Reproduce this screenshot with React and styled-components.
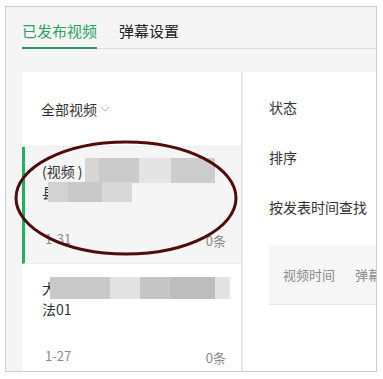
import React from "react";
import styled, { createGlobalStyle } from "styled-components";

const Global = createGlobalStyle`
  html, body { margin: 0; padding: 0; background: #fff; }
  body { font-family: "Noto Sans CJK SC", "Noto Sans", sans-serif; color: #333; }
`;

const Page = styled.div`
  width: 383px;
  height: 379px;
  padding: 6px 6px 0 5px;
  box-sizing: border-box;
  overflow: hidden;
`;

const Frame = styled.div`
  position: relative;
  height: 366px;
  border: 1px solid #cdcdcd;
  background: #f5f5f5;
  box-sizing: border-box;
  display: flex;
  flex-direction: column;
  overflow: hidden;
`;

const TabBar = styled.div`
  display: flex;
  align-items: flex-end;
  gap: 22px;
  height: 42px;
  flex-shrink: 0;
  margin-left: 16px;
  border-bottom: 1px solid #dcdcdc;
  box-sizing: border-box;
`;

const Tab = styled.div`
  font-size: 15px;
  line-height: 20px;
  padding-bottom: 6px;
  color: ${(p) => (p.$active ? "#2d9f68" : "#222")};
  border-bottom: 2px solid ${(p) => (p.$active ? "#2d9366" : "transparent")};
  margin-bottom: -1px;
`;

const Body = styled.div`
  flex: 1;
  display: flex;
  margin: 23px 0 0 16px;
  min-height: 0;
`;

const LeftPanel = styled.div`
  width: 219px;
  background: #fff;
  border-right: 1px solid #e4e4e4;
  display: flex;
  flex-direction: column;
  overflow: hidden;
`;

const Filter = styled.div`
  height: 75px;
  flex-shrink: 0;
  display: flex;
  align-items: center;
  gap: 3px;
  padding-left: 19px;
  font-size: 14px;
  color: #333;
  border-bottom: 1px solid #ececec;
  box-sizing: border-box;
`;

const Item = styled.div`
  height: 117px;
  flex-shrink: 0;
  box-sizing: border-box;
  padding: 13px 15px 15px 17px;
  display: flex;
  flex-direction: column;
  justify-content: space-between;
  background: ${(p) => (p.$active ? "#f5f5f5" : "#fff")};
  border-left: 3px solid ${(p) => (p.$active ? "#1fb25c" : "#fff")};
  border-bottom: 1px solid #ececec;
`;

const TitleLine = styled.div`
  display: flex;
  align-items: center;
  height: 21px;
  font-size: 14px;
  color: #333;
  white-space: nowrap;
`;

const Mosaic = styled.div`
  display: flex;
  align-items: stretch;
  height: ${(p) => p.$h || 22}px;
  margin-left: ${(p) => p.$ml || 0}px;
`;

const Cell = styled.div`
  width: ${(p) => p.$w}px;
  background: ${(p) => p.$c};
`;

const Foot = styled.div`
  display: flex;
  justify-content: space-between;
  align-items: flex-end;
  font-size: 13px;
  color: #8a8a8a;
  padding-left: 3px;
`;

const Count = styled.span`
  transform: translateY(2px);
`;

const RightPanel = styled.div`
  flex: 1;
  background: #fff;
  border-left: 1px solid #ececec;
  padding: 24px 0 0 26px;
  display: flex;
  flex-direction: column;
  min-width: 0;
`;

const Field = styled.div`
  height: 50px;
  flex-shrink: 0;
  line-height: 22px;
  font-size: 14px;
  color: #333;
  white-space: nowrap;
`;

const TableHead = styled.div`
  margin-top: -1px;
  height: 59px;
  flex-shrink: 0;
  background: #f6f6f6;
  border-bottom: 1px solid #e6e6e6;
  display: flex;
  align-items: center;
  gap: 20px;
  padding-left: 14px;
  font-size: 13px;
  color: #8a8a8a;
  white-space: nowrap;
  overflow: hidden;
`;

const Ring = styled.svg`
  position: absolute;
  left: 0;
  top: 0;
  pointer-events: none;
`;

const Chevron = () => (
  <svg width="10" height="8" viewBox="0 0 10 8">
    <path d="M1 2 L5 6 L9 2" fill="none" stroke="#bbb" strokeWidth="1" />
  </svg>
);

export default function App() {
  return (
    <>
      <Global />
      <Page>
        <Frame>
          <TabBar>
            <Tab $active>已发布视频</Tab>
            <Tab>弹幕设置</Tab>
          </TabBar>
          <Body>
            <LeftPanel>
              <Filter>
                全部视频
                <Chevron />
              </Filter>
              <Item $active>
                <div>
                  <TitleLine>
                    (视频 )
                    <Mosaic $h={25} $ml={2}>
                      <Cell $w={14} $c="#d6d6d6" />
                      <Cell $w={40} $c="#cbcbcb" />
                      <Cell $w={32} $c="#e4e4e4" />
                      <Cell $w={44} $c="#cdcdcd" />
                    </Mosaic>
                  </TitleLine>
                  <TitleLine>
                    县
                    <Mosaic $h={20} $ml={-8}>
                      <Cell $w={20} $c="#d2d2d2" />
                      <Cell $w={34} $c="#c9c9c9" />
                      <Cell $w={30} $c="#d8d8d8" />
                    </Mosaic>
                  </TitleLine>
                </div>
                <Foot>
                  <span>1-31</span>
                  <Count>0条</Count>
                </Foot>
              </Item>
              <Item>
                <div>
                  <TitleLine>
                    大
                    <Mosaic $h={22} $ml={-6}>
                      <Cell $w={60} $c="#c9c9c9" />
                      <Cell $w={30} $c="#e2e2e2" />
                      <Cell $w={30} $c="#c6c6c6" />
                      <Cell $w={45} $c="#bdbdbd" />
                      <Cell $w={15} $c="#e2e2e2" />
                    </Mosaic>
                  </TitleLine>
                  <TitleLine>法01</TitleLine>
                </div>
                <Foot>
                  <span>1-27</span>
                  <Count>0条</Count>
                </Foot>
              </Item>
            </LeftPanel>
            <RightPanel>
              <Field>状态</Field>
              <Field>排序</Field>
              <Field>按发表时间查找</Field>
              <TableHead>
                <span>视频时间</span>
                <span>弹幕内容</span>
              </TableHead>
            </RightPanel>
          </Body>
          <Ring width="371" height="364" viewBox="0 0 371 364">
            <ellipse
              cx="120"
              cy="191"
              rx="110"
              ry="56"
              fill="none"
              stroke="#520b0b"
              strokeWidth="3"
            />
          </Ring>
        </Frame>
      </Page>
    </>
  );
}
